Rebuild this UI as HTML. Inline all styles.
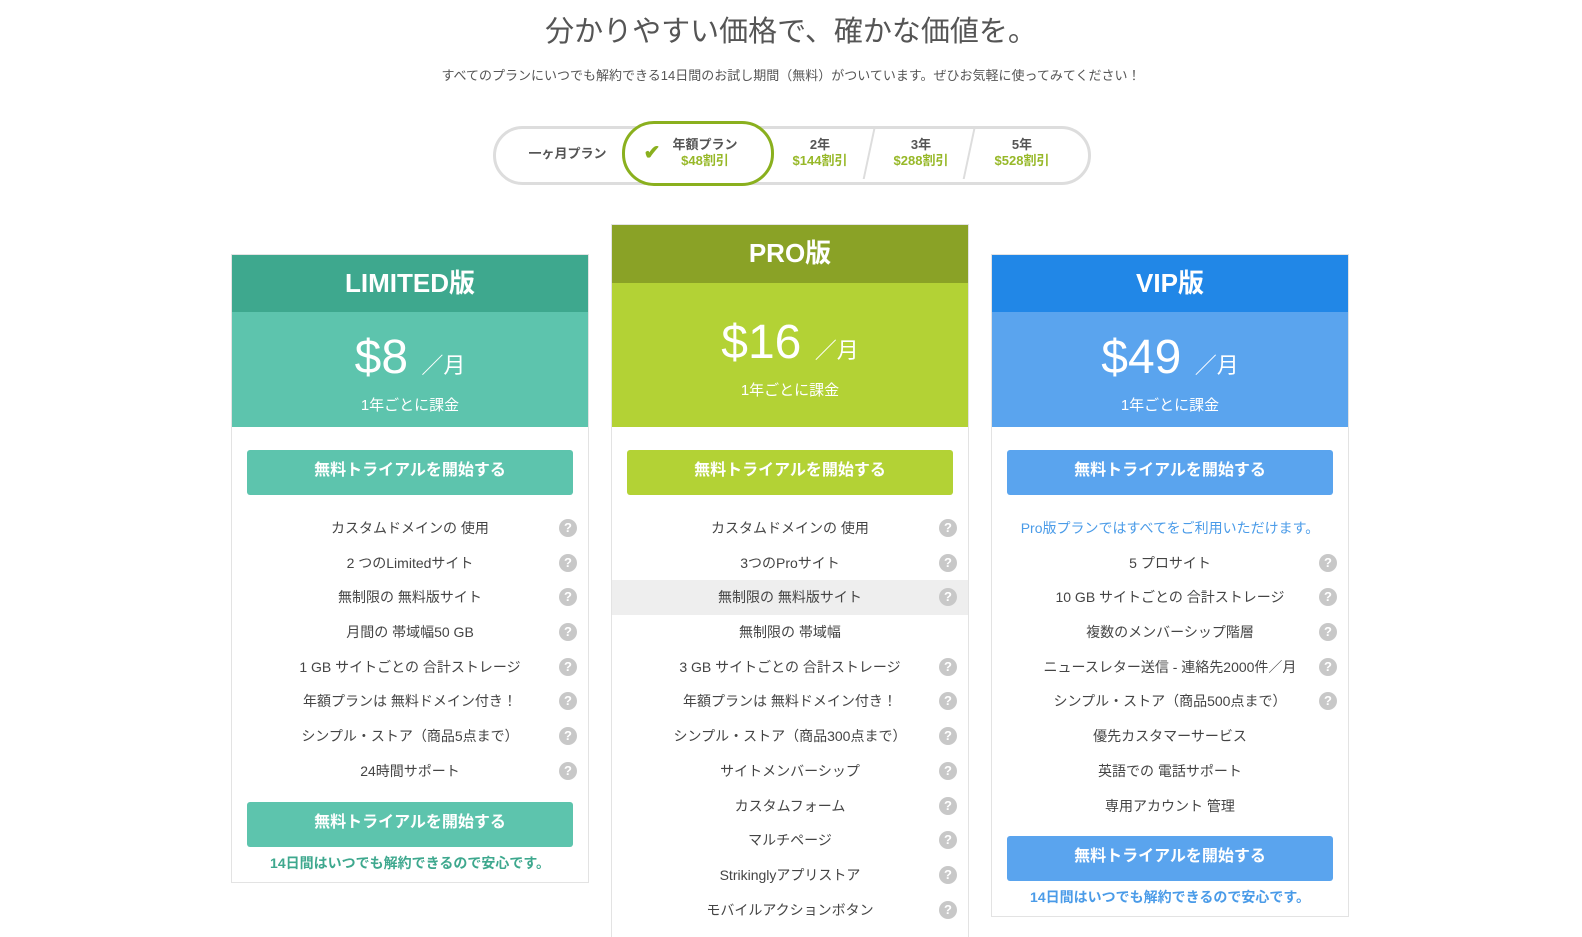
<!DOCTYPE html>
<html style="height:937px;overflow:hidden"><head><meta charset="utf-8"><style>
body{margin:0;width:1582px;height:937px;overflow:hidden;background:#fff;font-family:"Liberation Sans","Noto Sans CJK JP",sans-serif;position:relative;color:#444}
.abs{position:absolute}
h1{position:absolute;top:8px;left:0;width:1582px;text-align:center;font-size:29px;font-weight:normal;color:#555;margin:0}
.sub{top:65px;left:0;width:1582px;text-align:center;font-size:13px;color:#555}
.tog{left:493px;top:126px;width:592px;height:53px;border:3px solid #ddd;border-radius:30px;box-sizing:content-box}
.t{position:absolute;text-align:center;font-size:13px;font-weight:bold;color:#555;line-height:16px}
.t span{color:#97b828;display:block}
.sel{left:622px;top:121px;width:146px;height:59px;border:3px solid #8ab01e;border-radius:32px;background:#fff}
.card{position:absolute;width:358px;border:1px solid #e3e3e3;box-sizing:border-box;background:#fff;overflow:hidden}
.hd{height:57px;color:#fff;font-size:26px;font-weight:bold;text-align:center;line-height:57px}
.pr{height:115px;color:#fff;text-align:center}
.pr .p{font-size:48px;padding-top:18px;line-height:56px}
.pr .p small{font-size:22px}
.pr .n{font-size:15px}
.btn{margin:23px 15px 0;height:45px;border-radius:3px;color:#fff;font-weight:bold;font-size:16px;text-align:center;line-height:42px}
.rows{margin-top:16px}
.r{height:34.7px;line-height:34.7px;text-align:center;font-size:14px;color:#444;position:relative}
.r i{position:absolute;right:11px;top:8px;width:18px;height:18px;border-radius:50%;background:#c8c8c8;color:#fff;font-style:normal;font-weight:bold;font-size:13px;line-height:18px;text-align:center}
.foot{text-align:center;font-size:14px;font-weight:bold;margin-top:6px}
</style></head><body>
<h1>分かりやすい価格で、確かな価値を。</h1>
<div class="abs sub">すべてのプランにいつでも解約できる14日間のお試し期間（無料）がついています。ぜひお気軽に使ってみてください！</div>
<div class="abs tog"></div>
<div class="abs" style="left:868px;top:129px;width:2px;height:50px;background:#ddd;transform:skewX(-12deg)"></div>
<div class="abs" style="left:968px;top:129px;width:2px;height:50px;background:#ddd;transform:skewX(-12deg)"></div>
<div class="t" style="left:520px;top:146px;width:95px">一ヶ月プラン</div>
<div class="abs sel"></div>
<div class="t" style="left:640px;top:137px;width:24px;font-size:20px;color:#8ab01e;line-height:32px">✔</div>
<div class="t" style="left:665px;top:137px;width:80px">年額プラン<span>$48割引</span></div>
<div class="t" style="left:780px;top:137px;width:80px">2年<span>$144割引</span></div>
<div class="t" style="left:881px;top:137px;width:80px">3年<span>$288割引</span></div>
<div class="t" style="left:982px;top:137px;width:80px">5年<span>$528割引</span></div>

<div class="card" style="left:231px;top:254px;height:629px">
<div class="hd" style="background:#3ea88e">LIMITED版</div>
<div class="pr" style="background:#5dc4ad"><div class="p">$8 <small>／月</small></div><div class="n">1年ごとに課金</div></div>
<div class="btn" style="background:#5dc4ad">無料トライアルを開始する</div>
<div class="rows">
<div class="r">カスタムドメインの 使用<i>?</i></div>
<div class="r">2 つのLimitedサイト<i>?</i></div>
<div class="r">無制限の 無料版サイト<i>?</i></div>
<div class="r">月間の 帯域幅50 GB<i>?</i></div>
<div class="r">1 GB サイトごとの 合計ストレージ<i>?</i></div>
<div class="r">年額プランは 無料ドメイン付き！<i>?</i></div>
<div class="r">シンプル・ストア（商品5点まで）<i>?</i></div>
<div class="r">24時間サポート<i>?</i></div>
</div>
<div class="btn" style="background:#5dc4ad;margin-top:13px">無料トライアルを開始する</div>
<div class="foot" style="color:#3ea88e">14日間はいつでも解約できるので安心です。</div>
</div>

<div class="card" style="left:611px;top:224px;height:713px;border-bottom:none">
<div class="hd" style="background:#8aa226;height:58px;line-height:56px">PRO版</div>
<div class="pr" style="background:#b3d235;height:144px"><div class="p" style="padding-top:32px">$16 <small>／月</small></div><div class="n">1年ごとに課金</div></div>
<div class="btn" style="background:#b3d235">無料トライアルを開始する</div>
<div class="rows">
<div class="r">カスタムドメインの 使用<i>?</i></div>
<div class="r">3つのProサイト<i>?</i></div>
<div class="r" style="background:#eee">無制限の 無料版サイト<i>?</i></div>
<div class="r">無制限の 帯域幅</div>
<div class="r">3 GB サイトごとの 合計ストレージ<i>?</i></div>
<div class="r">年額プランは 無料ドメイン付き！<i>?</i></div>
<div class="r">シンプル・ストア（商品300点まで）<i>?</i></div>
<div class="r">サイトメンバーシップ<i>?</i></div>
<div class="r">カスタムフォーム<i>?</i></div>
<div class="r">マルチページ<i>?</i></div>
<div class="r">Strikinglyアプリストア<i>?</i></div>
<div class="r">モバイルアクションボタン<i>?</i></div>
</div>
</div>

<div class="card" style="left:991px;top:254px;height:663px">
<div class="hd" style="background:#2187e7">VIP版</div>
<div class="pr" style="background:#5aa4ee"><div class="p">$49 <small>／月</small></div><div class="n">1年ごとに課金</div></div>
<div class="btn" style="background:#5aa4ee">無料トライアルを開始する</div>
<div class="rows">
<div class="r" style="color:#4a9be8">Pro版プランではすべてをご利用いただけます。</div>
<div class="r">5 プロサイト<i>?</i></div>
<div class="r">10 GB サイトごとの 合計ストレージ<i>?</i></div>
<div class="r">複数のメンバーシップ階層<i>?</i></div>
<div class="r">ニュースレター送信 - 連絡先2000件／月<i>?</i></div>
<div class="r">シンプル・ストア（商品500点まで）<i>?</i></div>
<div class="r">優先カスタマーサービス</div>
<div class="r">英語での 電話サポート</div>
<div class="r">専用アカウント 管理</div>
</div>
<div class="btn" style="background:#5aa4ee;margin-top:13px">無料トライアルを開始する</div>
<div class="foot" style="color:#4a9be8">14日間はいつでも解約できるので安心です。</div>
</div>
</body></html>
